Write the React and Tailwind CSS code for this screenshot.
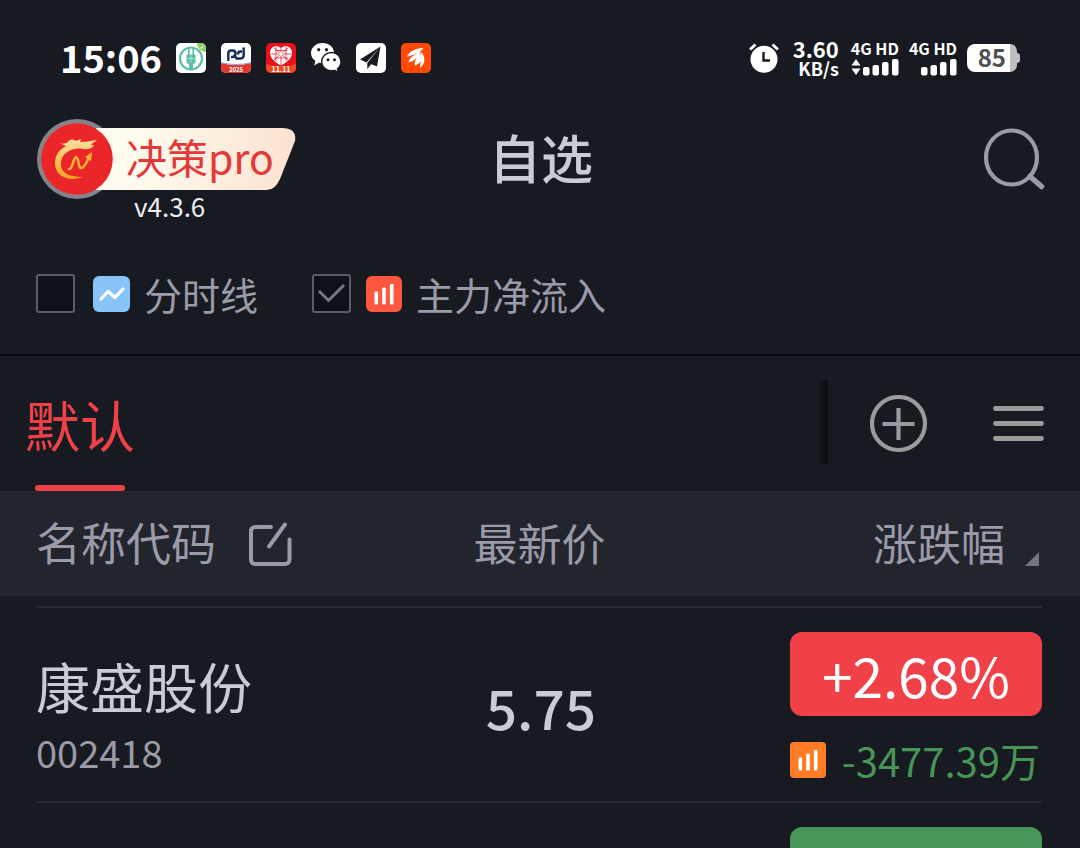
import React from "react";

function BankIcon() {
  return (
    <svg viewBox="0 0 30 30" className="size-[30px]" aria-hidden="true">
      <rect width="30" height="30" rx="5" fill="#fff" />
      <path d="M21 0h4a5 5 0 0 1 5 5v4a9 9 0 0 1-9-9z" fill="#8ccf5e" />
      <path d="M25 5.500l2-2" stroke="#fff" strokeWidth="1.300" />
      <circle cx="15" cy="15.500" r="11" fill="none" stroke="#5cbfaa" strokeWidth="2.200" />
      <path d="M12.800 4.500v9M17.200 4.500v9" fill="none" stroke="#5cbfaa" strokeWidth="1.600" />
      <path d="M10.500 11.500h9v8l-2.500 2V26h-4v-4.500l-2.500-2z" fill="#5cbfaa" />
      <path d="M15 12v8M11.500 15.500h7" stroke="#bfe6dd" strokeWidth=".8" />
    </svg>
  );
}

function PdIcon() {
  return (
    <svg viewBox="0 0 30 30" className="size-[30px]" aria-hidden="true">
      <rect width="30" height="30" rx="5" fill="#fff" />
      <path d="M0 20Q15 24 30 20v5a5 5 0 0 1-5 5H5a5 5 0 0 1-5-5z" fill="#e5352f" />
      <path d="M0 19.500Q15 23.500 30 19.500" fill="none" stroke="#7fa9dd" strokeWidth="1" />
      <path d="M7.300 18V10.500q0-3 3-3h1.200q3 0 3 3t-3 3.500H10" fill="none" stroke="#122b5c" strokeWidth="2.400" />
      <path d="M22.700 4.500V11.500q0 4-3 4H16q-1.500 0-1.500-2.500M21 8.500h-1.500q-2.500 0-2.500 3" fill="none" stroke="#122b5c" strokeWidth="2.400" />
      <text x="15" y="28.500" textAnchor="middle" fontSize="6" fontWeight="700" fill="#fff">2025</text>
    </svg>
  );
}

function HeartIcon() {
  return (
    <svg viewBox="0 0 30 30" className="size-[30px]" aria-hidden="true">
      <rect width="30" height="30" rx="5" fill="#e8101c" />
      <path d="M0 21l7 2h16l7-2v4a5 5 0 0 1-5 5H5a5 5 0 0 1-5-5z" fill="#ef4b23" />
      <path d="M15 5C11 1.500 4 3 4 10c0 5 4.500 9 11 12.500C21.500 19 26 15 26 10c0-7-7-8.500-11-5z" fill="#fff" />
      <path d="M8 5l14 12M22 5L8 17M4.500 11h21M15 5v17M9 7.500h12M8 15h14M10 4v14M20 4v14" stroke="#e8101c" strokeWidth=".7" />
      <circle cx="15" cy="11" r="1.800" fill="#fff" />
      <text x="15" y="28.700" textAnchor="middle" fontSize="7" fontWeight="700" fill="#fff">11.11</text>
    </svg>
  );
}

function WechatIcon() {
  return (
    <svg viewBox="0 0 30 30" className="size-[30px]" aria-hidden="true">
      <path d="M11.500 0C5 0 0 4.500 0 10c0 3.200 1.600 6 4.300 7.800L3.300 22.500l4.500-2.700c1.200.3 2.400.4 3.700.4 6.500 0 11.500-4.500 11.500-10.200S18 0 11.500 0z" fill="#fff" />
      <path d="M20.500 9.500c-5.500 0-9.900 4.100-9.900 9.100s4.400 9.200 9.900 9.200c1.100 0 2.100-.2 3.100-.5l3.600 2.300-.7-3.900c2.200-1.600 3.500-4.200 3.500-7.100 0-5-4.200-9.100-9.500-9.100z" fill="#fff" stroke="#171a21" strokeWidth="1.400" />
      <circle cx="7.700" cy="6.700" r="1.600" fill="#171a21" />
      <circle cx="15.500" cy="6.700" r="1.600" fill="#171a21" />
      <circle cx="17" cy="16.700" r="1.500" fill="#171a21" />
      <circle cx="23.500" cy="16.700" r="1.500" fill="#171a21" />
    </svg>
  );
}

function PlaneIcon() {
  return (
    <svg viewBox="0 0 30 30" className="size-[30px]" aria-hidden="true">
      <rect width="30" height="30" rx="5" fill="#fff" />
      <path d="M24.500 3.500L4 16.500l6.500 3zM24.500 3.500L11.300 20v6l3.700-4.500zM24.500 3.500L12.500 20l8.500 3.500z" fill="#171a21" />
    </svg>
  );
}

function FeatherIcon() {
  return (
    <svg viewBox="0 0 30 30" className="size-[30px]" aria-hidden="true">
      <rect width="30" height="30" rx="5" fill="#ff4a05" />
      <path d="M6 14C8 8.500 14 5.500 22.500 5 19 9.500 13 11.500 6 14zM7.500 19.500c1-5 6-8 12.500-11.500-1.500 5.500-6 9.500-12.500 11.500zM14 22.500c-1-5 2.500-9.500 7.500-13 1 5.500-1.500 11-7.500 13zM19 25c0-4.500 1-8.500 3-13.500 2.500 5 1.500 10-3 13.500z" fill="#fff" />
    </svg>
  );
}

function AlarmIcon() {
  return (
    <svg viewBox="0 0 30 30" className="size-[30px]" aria-hidden="true">
      <circle cx="15" cy="16.300" r="13.500" fill="#fff" />
      <path d="M1 6.500L6.500 1.500M29 6.500L23.500 1.500" stroke="#fff" strokeWidth="3" />
      <path d="M14.500 9v8.500h6.500" fill="none" stroke="#171a21" strokeWidth="2.400" />
    </svg>
  );
}

function Signal({ arrows }) {
  return (
    <div className="flex flex-col items-end">
      <span className="pb-0.5 text-base leading-4">4G HD</span>
      <svg viewBox="0 0 48 18" className="h-[18px] w-12" fill="#fff" aria-hidden="true">
        {arrows && <path d="M5 1l4.500 6.500h-9zM5 17l4.500-6.500h-9z" />}
        <rect x="12" y="9" width="6.500" height="8.500" rx="2" />
        <rect x="21.500" y="7" width="6.500" height="10.500" rx="2" />
        <rect x="31" y="4" width="6.500" height="13.500" rx="2" />
        <rect x="41" y="1" width="6.500" height="16.500" rx="2" />
      </svg>
    </div>
  );
}

function StatusBar() {
  return (
    <div className="flex h-[116px] shrink-0 items-center justify-between px-[60px] font-bold text-white">
      <div className="flex items-center gap-3.5">
        <time className="pb-0.5 text-[38px] leading-[44px]">15:06</time>
        <div className="flex items-center gap-[15px]">
          <BankIcon />
          <PdIcon />
          <HeartIcon />
          <WechatIcon />
          <PlaneIcon />
          <FeatherIcon />
        </div>
      </div>
      <div className="flex items-center gap-2.5">
        <AlarmIcon />
        <div className="flex flex-col items-end pl-1 pr-0.5">
          <span className="text-[22px] leading-5">3.60</span>
          <span className="text-lg leading-5">KB/s</span>
        </div>
        <Signal arrows />
        <Signal />
        <div className="flex items-center">
          <div className="flex h-7 w-[43px] items-center justify-end rounded-l-lg bg-white pb-0.5 pr-1 text-2xl leading-7 text-[#50504f]">
            85
          </div>
          <div className="h-7 w-[7px] rounded-r-lg bg-[#bfbfc0]" />
          <div className="h-2.5 w-[3px] rounded-r bg-[#bfbfc0]" />
        </div>
      </div>
    </div>
  );
}

function Brand() {
  return (
    <div className="relative w-[260px]">
      <svg viewBox="0 0 260 80" className="absolute left-0 top-0 h-20 w-[260px]" aria-hidden="true">
        <defs>
          <linearGradient id="pill" x1="0" x2="1">
            <stop offset=".2" stopColor="#fffbee" />
            <stop offset="1" stopColor="#fce2d0" />
          </linearGradient>
          <linearGradient id="gold" x1="0" x2="0" y1="0" y2="1">
            <stop offset="0" stopColor="#ffe0a0" />
            <stop offset="1" stopColor="#f6a51e" />
          </linearGradient>
        </defs>
        <circle cx="41" cy="40" r="40" fill="#85828b" />
        <path d="M60 9H246q15 0 13 13L244 60q-5 11-13 11H60z" fill="url(#pill)" />
        <circle cx="41" cy="40" r="35.800" fill="#ea2628" />
        <path d="M23 24c3 1 6 1 9-1 2-3 5-3 8-1l5-2-1 3c5 0 10-1 17-2-2 2-5 3-6 5h3c-2 4-7 5-11 4-3-.7-6-.6-9 0-9 2-14 9-13 17 1 7 8 11 22 11-18 6-29-3-28-16 1-7 5-12 11-15z" fill="url(#gold)" />
        <path d="M33 50c4 0 4-11 7-12 3 0 2 11 5 11s6-6 8-11" fill="none" stroke="#fcb13b" strokeWidth="2.600" strokeLinecap="round" />
        <path d="M56 33l-7 5 6 4z" fill="#fcb13b" />
      </svg>
      <div className="relative pl-[90px] pt-[7px] text-[41px] leading-[60px] text-[#e5383a]">决策pro</div>
      <div className="pl-[98px] pt-1 text-[26px] leading-8 text-[#eeeef2]">v4.3.6</div>
    </div>
  );
}

function Header() {
  return (
    <header className="grid h-[120px] shrink-0 grid-cols-[1fr_auto_1fr] items-start pl-9 pr-[34px] pt-[3px]">
      <Brand />
      <h1 className="pt-2 text-[52px] font-medium leading-[60px] text-[#cbcbd5]">自选</h1>
      <button type="button" aria-label="搜索" className="mt-2 justify-self-end">
        <svg viewBox="0 0 64 64" className="size-16" fill="none" stroke="#9a9aa8" strokeLinecap="round" aria-hidden="true">
          <ellipse cx="29.500" cy="30.500" rx="25.500" ry="27" strokeWidth="4.200" />
          <path d="M48 49.500l11.500 10" strokeWidth="5.500" />
        </svg>
      </button>
    </header>
  );
}

function Bars({ className }) {
  return (
    <svg viewBox="0 0 36 36" className={className} aria-hidden="true">
      {[13, 17, 20.5].map((h, i) => (
        <rect key={h} x={8.5 + i * 7.7} y={28.5 - h} width="3.600" height={h} rx="1" fill="#fff" />
      ))}
    </svg>
  );
}

function Option({ label, icon, iconGap, checked }) {
  return (
    <label className="flex items-center text-[38px] leading-[44px] text-[#9a9aa8]">
      <span className="grid size-[39px]">
        <input
          type="checkbox"
          defaultChecked={checked}
          className="peer col-start-1 row-start-1 size-[39px] appearance-none rounded-[3px] border-2 border-[#5b5d66] bg-[#0d1119]"
        />
        <svg
          viewBox="0 0 39 39"
          className="pointer-events-none invisible col-start-1 row-start-1 size-[39px] peer-checked:visible"
          fill="none"
          stroke="#777982"
          strokeWidth="3"
          aria-hidden="true"
        >
          <path d="M7 17l9.500 9.500L32 11" />
        </svg>
      </span>
      <span className={iconGap}>{icon}</span>
      <span className="pl-3.5">{label}</span>
    </label>
  );
}

function Filters() {
  return (
    <div className="flex h-[120px] shrink-0 items-center gap-[54px] border-b-2 border-[#07080b] px-9 pb-[3px]">
      <Option
        label="分时线"
        iconGap="pl-[18px]"
        icon={
          <svg viewBox="0 0 37 36" className="h-9 w-[37px] rounded-md bg-[#88c3f9]" fill="none" aria-hidden="true">
            <path d="M8 23l7-7.500 7 6L30 13" stroke="#fff" strokeWidth="3.200" strokeLinecap="round" strokeLinejoin="round" />
          </svg>
        }
      />
      <Option
        label="主力净流入"
        iconGap="pl-[15px]"
        checked
        icon={<Bars className="size-9 rounded-md bg-[#ff563f]" />}
      />
    </div>
  );
}

function GroupTabs() {
  return (
    <nav className="flex h-[135px] shrink-0 items-stretch">
      <div className="flex flex-1 items-stretch">
        <button type="button" className="flex flex-col items-center justify-end pl-[25px] text-[#f04048]">
          <span className="pb-7 text-[55px] leading-[68px]">默认</span>
          <span className="h-1.5 w-[90px] rounded-full bg-[#f04048]" />
        </button>
      </div>
      <div className="mr-[42px] mt-6 h-[84px] w-3 bg-linear-to-r from-[#171a21] to-[#0b0c0f]" />
      <div className="flex items-center gap-[65px] pr-9">
        <button type="button" aria-label="添加分组">
          <svg viewBox="0 0 58 58" className="size-[58px]" fill="none" stroke="#9b9b9d" strokeWidth="4.200" aria-hidden="true">
            <circle cx="28.500" cy="28.500" r="26.500" />
            <path d="M28.500 13v32M12.500 29h32" />
          </svg>
        </button>
        <button type="button" aria-label="菜单">
          <svg viewBox="0 0 51 36" className="h-9 w-[51px]" stroke="#9b9b9d" strokeWidth="4.800" strokeLinecap="round" aria-hidden="true">
            <path d="M2.500 2.500h46M2.500 17.500h46M2.500 32.500h46" />
          </svg>
        </button>
      </div>
    </nav>
  );
}

function Quotes() {
  return (
    <table className="block">
      <thead className="block">
        <tr className="grid h-[105px] grid-cols-3 items-center bg-[#22252d] pl-9 pr-[41px] text-[#9a9aa8]">
          <th className="flex items-center gap-8 text-[45px] font-normal leading-[52px]">
            <span className="pb-1">名称代码</span>
            <button type="button" aria-label="编辑">
              <svg viewBox="0 0 45 45" className="size-[45px]" fill="none" stroke="#9a9aa8" strokeWidth="4" strokeLinecap="round" strokeLinejoin="round" aria-hidden="true">
                <path d="M23 6H7.500Q3 6 3 10.500v28Q3 43 7.500 43h29q5 0 5-4.500V18.500" />
                <path d="M21 25.500L37 3.500" />
              </svg>
            </button>
          </th>
          <th className="pb-1 pl-1 text-center text-[44px] font-normal leading-[52px]">最新价</th>
          <th className="pb-1 text-[44px] font-normal leading-[52px]">
            <button type="button" className="flex w-full items-end justify-end gap-5">
              <span>涨跌幅</span>
              <svg viewBox="0 0 14 14" className="mb-0.5 size-3.5" fill="#73757e" aria-hidden="true">
                <path d="M14 0v14H0z" />
              </svg>
            </button>
          </th>
        </tr>
      </thead>
      <tbody className="ml-9 mr-[38px] mt-2.5 block">
        <tr className="grid h-[195px] grid-cols-3 border-t-2 border-[#262932]">
          <td className="pt-[46px]">
            <div className="text-[54px] leading-[64px] text-[#cbcbd5]">康盛股份</div>
            <div className="pt-3 text-[38px] leading-[44px] text-[#9a9aa8]">002418</div>
          </td>
          <td className="pl-1 pt-16 text-center text-[55px] font-medium leading-[68px] text-[#cbcbd5]">5.75</td>
          <td className="flex flex-col items-end pt-6">
            <div className="h-[84px] w-[252px] rounded-xl bg-[#f04048] text-center text-[55px] leading-[84px] text-white">+2.68%</div>
            <div className="flex w-[252px] items-center justify-between pt-[18px] text-[40px] leading-[52px] text-[#489558]">
              <Bars className="size-9 rounded bg-[#ff7b24]" />
              <span className="whitespace-nowrap pr-0.5">-3477.39万</span>
            </div>
          </td>
        </tr>
        <tr className="grid h-[195px] grid-cols-3 border-t-2 border-[#262932]">
          <td />
          <td />
          <td className="flex flex-col items-end pt-6">
            <div className="h-[84px] w-[252px] rounded-xl bg-[#489558]" />
          </td>
        </tr>
      </tbody>
    </table>
  );
}

export default function App() {
  return (
    <div className="flex h-screen flex-col overflow-hidden bg-[#171a21] font-['Noto_Sans_CJK_SC',sans-serif]">
      <StatusBar />
      <Header />
      <Filters />
      <GroupTabs />
      <main className="min-h-0 flex-1 overflow-hidden">
        <Quotes />
      </main>
    </div>
  );
}
